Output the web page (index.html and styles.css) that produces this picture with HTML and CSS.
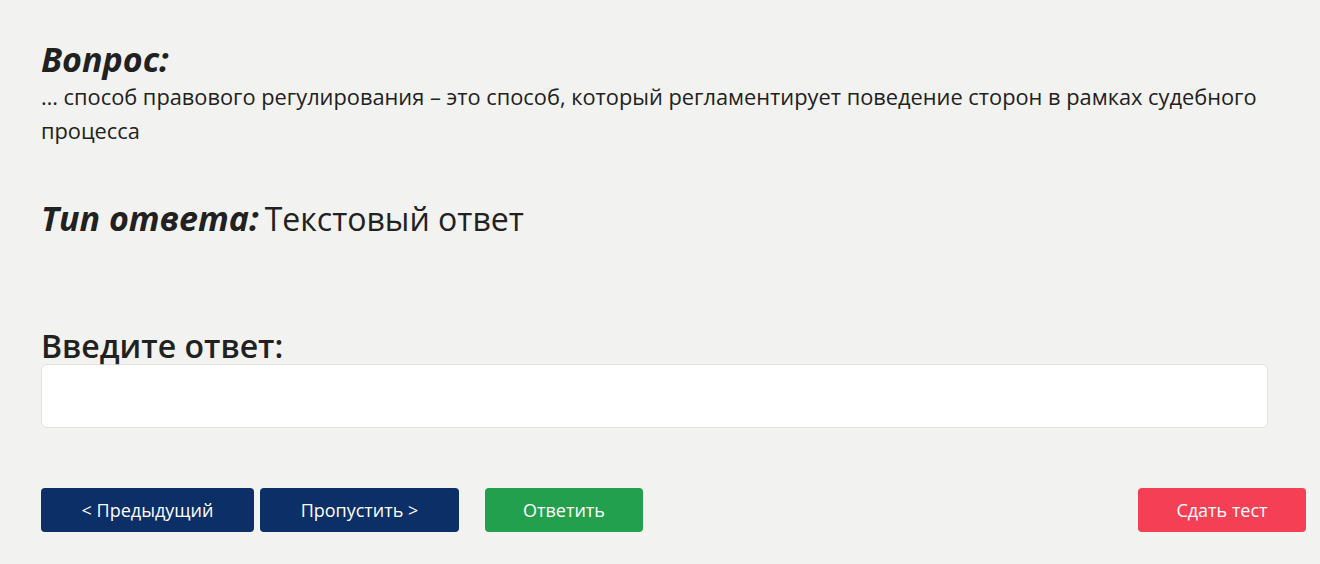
FILE: index.html
```html
<!DOCTYPE html>
<html lang="ru">
<head>
  <meta charset="UTF-8" />
  <meta name="viewport" content="width=device-width, initial-scale=1.0" />
  <title>Тест</title>
  <link rel="stylesheet" href="styles.css">
</head>
<body>
  <div class="page">
    <div class="question">
      <h2 class="label">Вопрос:</h2>
      <p class="question-text">… способ правового регулирования – это способ, который регламентирует поведение сторон в рамках судебного процесса</p>
    </div>

    <div class="answer-type">
      <span class="label">Тип ответа:</span>
      <span class="type-value">Текстовый ответ</span>
    </div>

    <div class="answer">
      <h3 class="answer-title">Введите ответ:</h3>
      <input type="text" class="answer-input">
    </div>

    <div class="actions">
      <div class="actions-left">
        <button class="btn btn-nav">&lt; Предыдущий</button>
        <button class="btn btn-nav btn-skip">Пропустить &gt;</button>
        <button class="btn btn-answer">Ответить</button>
      </div>
      <button class="btn btn-finish">Сдать тест</button>
    </div>
  </div>
</body>
</html>
```

FILE: styles.css
```css
html, body {
  margin: 0;
  padding: 0;
  height: 100%;
  background: #f2f2f0;
  font-family: "Open Sans", "Noto Sans", sans-serif;
  color: #212121;
}

.page {
  padding: 39px 14px 0 41px;
}

.question {
  padding-right: 38px;
}

.label {
  margin: 0;
  font-size: 34px;
  font-weight: 700;
  font-style: italic;
  line-height: 1.2;
}

.question-text {
  margin: 0;
  font-size: 21.8px;
  line-height: 34px;
}

.answer-type {
  margin-top: 50px;
  display: flex;
  align-items: baseline;
  gap: 6px;
}

.type-value {
  font-size: 32px;
  line-height: 1.2;
}

.answer {
  margin-top: 88px;
  padding-right: 38px;
}

.answer-title {
  margin: 0 0 -1px;
  font-size: 32px;
  font-weight: 600;
  line-height: 1.2;
}

.answer-input {
  display: block;
  box-sizing: border-box;
  width: 100%;
  height: 64px;
  border: 1px solid #e2e2e0;
  border-radius: 6px;
  background: #fff;
  font-family: inherit;
  font-size: 18px;
  padding: 0 14px;
}

.actions {
  margin-top: 60px;
  display: flex;
  justify-content: space-between;
}

.actions-left {
  display: flex;
  gap: 6px;
}

.btn {
  height: 44px;
  border: none;
  border-radius: 4px;
  color: #fff;
  font-family: inherit;
  font-size: 18px;
  padding: 0 16px;
  cursor: pointer;
}

.btn-nav {
  background: #0b2f66;
  width: 213px;
}

.btn-skip {
  width: 199px;
}

.btn-answer {
  margin-left: 20px;
  width: 158px;
  background: #23a04e;
}

.btn-finish {
  width: 168px;
  background: #f43f54;
}
```
